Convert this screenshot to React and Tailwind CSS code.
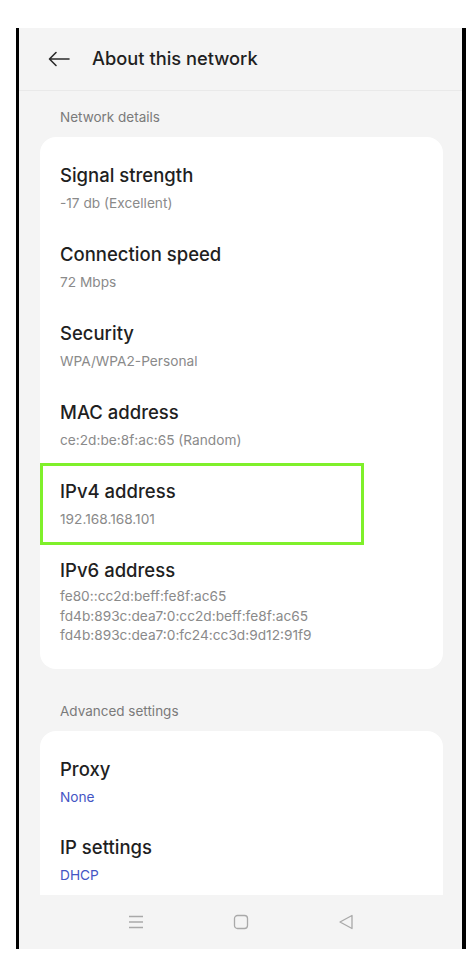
import React from 'react';

const details = [
  { title: 'Signal strength', value: ['-17 db (Excellent)'] },
  { title: 'Connection speed', value: ['72 Mbps'] },
  { title: 'Security', value: ['WPA/WPA2-Personal'] },
  { title: 'MAC address', value: ['ce:2d:be:8f:ac:65 (Random)'] },
  { title: 'IPv4 address', value: ['192.168.168.101'], highlight: true },
  {
    title: 'IPv6 address',
    value: [
      'fe80::cc2d:beff:fe8f:ac65',
      'fd4b:893c:dea7:0:cc2d:beff:fe8f:ac65',
      'fd4b:893c:dea7:0:fc24:cc3d:9d12:91f9',
    ],
  },
];

const advanced = [
  { title: 'Proxy', value: 'None' },
  { title: 'IP settings', value: 'DHCP' },
];

const Item = ({ title, value, highlight }) => (
  <div className="relative pl-[20px] pt-[13px] pb-[17px]">
    {highlight && (
      <div className="absolute left-0 top-[-3px] w-[324px] h-[82px] border-[3px] border-[#7ff02a]" />
    )}
    <div className="text-[18.5px] leading-[24px] font-medium text-[#1f1f1f]">{title}</div>
    <div className={value.length > 1 ? 'mt-[5px] text-[13.7px] leading-[19.5px] text-[#8a8a8a]' : 'mt-[7px] text-[13.7px] leading-[18px] text-[#8a8a8a]'}>
      {value.map((v) => (
        <div key={v}>{v}</div>
      ))}
    </div>
  </div>
);

export default function App() {
  return (
    <div className="w-[475px] h-[960px] bg-white pt-[28px] pl-[16px]" style={{ fontFamily: 'Inter, Roboto, sans-serif' }}>
      <div className="w-[450px] h-[921px] border-l-[3px] border-r-[4px] border-black bg-[#f4f4f4] flex flex-col overflow-hidden">
        <div className="h-[63px] shrink-0 flex items-center pl-[29px] border-b border-[#e9e9e9]">
          <svg width="22" height="16" viewBox="0 0 22 16" fill="none" stroke="#2a2a2a" strokeWidth="1.6" strokeLinecap="round" strokeLinejoin="round">
            <path d="M21 8H2M8 1.5L1.5 8L8 14.5" />
          </svg>
          <span className="ml-[22px] text-[18.3px] font-medium text-[#1f1f1f]">About this network</span>
        </div>

        <div className="flex-1 overflow-hidden pl-[21px] pr-[19px]">
          <div className="pt-[17px] pl-[20px] text-[13.5px] leading-[18px] text-[#7a7a7a]">Network details</div>
          <div className="mt-[11px] bg-white rounded-[16px] pt-[13px] pb-[6px]">
            {details.map((d) => (
              <Item key={d.title} {...d} />
            ))}
          </div>

          <div className="pt-[33px] pl-[20px] text-[13.5px] leading-[18px] text-[#7a7a7a]">Advanced settings</div>
          <div className="mt-[11px] bg-white rounded-[16px] pt-[13px] pb-[20px]">
            {advanced.map((a) => (
              <div key={a.title} className="pl-[20px] pt-[13px] pb-[16px]">
                <div className="text-[18.5px] leading-[24px] font-medium text-[#1f1f1f]">{a.title}</div>
                <div className="mt-[7px] text-[13.7px] leading-[18px] text-[#4455c4]">{a.value}</div>
              </div>
            ))}
          </div>
        </div>

        <div className="h-[54px] shrink-0 flex items-center justify-around px-[64px]">
          <svg width="16" height="14" viewBox="0 0 16 14" fill="none" stroke="#a9a9a9" strokeWidth="1.3">
            <path d="M1 1.5H15M1 7H15M1 12.5H15" />
          </svg>
          <svg width="16" height="16" viewBox="0 0 16 16" fill="none" stroke="#a9a9a9" strokeWidth="1.3">
            <rect x="1.5" y="1.5" width="13" height="13" rx="3" />
          </svg>
          <svg width="16" height="16" viewBox="0 0 16 16" fill="none" stroke="#a9a9a9" strokeWidth="1.3" strokeLinejoin="round">
            <path d="M14 1.5V14.5L2 8Z" />
          </svg>
        </div>
      </div>
    </div>
  );
}
